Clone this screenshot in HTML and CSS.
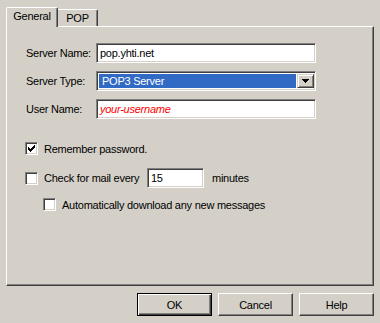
FILE: index.html
```html
<!DOCTYPE html>
<html lang="en">
<head>
    <meta charset="UTF-8">
    <title>Account Properties</title>
    <link rel="stylesheet" href="styles.css">
</head>
<body>
    <div class="dialog">
        <div class="tabs" role="tablist">
            <div class="tab tab-active" role="tab" aria-selected="true">General</div>
            <div class="tab" role="tab">POP</div>
        </div>

        <div class="panel" role="tabpanel">
            <div class="form-grid">
                <span class="field-label">Server Name:</span>
                <div class="textbox">pop.yhti.net</div>

                <span class="field-label">Server Type:</span>
                <div class="combo">
                    <span class="combo-value">POP3 Server</span>
                    <span class="combo-btn">
                        <svg width="7" height="4" viewBox="0 0 7 4" shape-rendering="crispEdges"><path d="M0 0h7v1h-1v1h-1v1h-1v1h-1v-1h-1v-1h-1v-1h-1z" fill="#000"/></svg>
                    </span>
                </div>

                <span class="field-label">User Name:</span>
                <div class="textbox textbox-hint">your-username</div>
            </div>

            <div class="check-row remember-row">
                <span class="checkbox">
                    <svg width="7" height="7" viewBox="0 0 7 7" shape-rendering="crispEdges"><path d="M6 0h1v3h-1v1h-1v1h-1v1h-1v1h-1v-1h-1v-1h-1v-3h1v1h1v1h1v-1h1v-1h1z" fill="#000"/></svg>
                </span>
                <span class="check-text">Remember password.</span>
            </div>

            <div class="check-row interval-row">
                <span class="checkbox"></span>
                <span class="check-text interval-text">Check for mail every</span>
                <div class="textbox textbox-small">15</div>
                <span class="unit-text">minutes</span>
            </div>

            <div class="check-row auto-row">
                <span class="checkbox"></span>
                <span class="check-text">Automatically download any new messages</span>
            </div>
        </div>

        <div class="buttons">
            <button type="button" class="btn btn-default">OK</button>
            <button type="button" class="btn">Cancel</button>
            <button type="button" class="btn">Help</button>
        </div>
    </div>
</body>
</html>
```

FILE: styles.css
```css
:root {
    --face: #d4d0c8;
    --shadow: #808080;
    --dark: #404040;
    --light: #ffffff;
    --select: #316ac5;
}

html, body {
    margin: 0;
    background: var(--face);
}

body {
    font-family: 'Liberation Sans', Arial, sans-serif;
    font-size: 11px;
    letter-spacing: -0.25px;
    color: #000;
    width: 380px;
    height: 323px;
    overflow: hidden;
}

.dialog {
    padding-top: 7px;
}

.tabs {
    display: flex;
    align-items: flex-end;
    height: 19px;
    margin: 0 6px;
}

.tab {
    box-sizing: border-box;
    height: 17px;
    width: 40px;
    padding-top: 2px;
    text-align: center;
    border-top: 1px solid var(--light);
    border-right: 1px solid var(--dark);
    box-shadow: inset -1px 0 var(--shadow);
    border-top-right-radius: 2px;
}

.tab-active {
    position: relative;
    z-index: 1;
    height: 20px;
    width: 52px;
    margin-bottom: -1px;
    padding-top: 2px;
    background: var(--face);
    border-left: 1px solid var(--light);
    border-top-left-radius: 2px;
}

.panel {
    box-sizing: border-box;
    height: 260px;
    margin: 0 6px;
    padding: 16px 0 0 19px;
    border: 1px solid;
    border-color: var(--light) var(--dark) var(--dark) var(--light);
    box-shadow: inset -1px -1px var(--shadow);
}

.form-grid {
    display: grid;
    grid-template-columns: 70px 220px;
    row-gap: 8px;
    align-items: center;
}

.textbox,
.combo,
.checkbox {
    box-sizing: border-box;
    background: #fff;
    border: 1px solid;
    border-color: var(--shadow) var(--light) var(--light) var(--shadow);
    box-shadow: inset 1px 1px var(--dark), inset -1px -1px var(--face);
}

.textbox {
    height: 20px;
    padding: 3px 3px 0;
    white-space: nowrap;
}

.textbox-hint {
    color: #ff0000;
    font-style: italic;
}

.combo {
    display: flex;
    height: 20px;
    padding: 2px 1px 2px 2px;
}

.combo-value {
    flex: 1;
    margin-right: 1px;
    padding: 1px 0 0 3px;
    background: var(--select);
    color: #fff;
}

.combo-btn {
    box-sizing: border-box;
    display: flex;
    align-items: center;
    justify-content: center;
    width: 17px;
    border: 1px solid;
    border-color: var(--face) var(--dark) var(--dark) var(--face);
    box-shadow: inset 1px 1px var(--light), inset -1px -1px var(--shadow);
    background: var(--face);
}

.check-row {
    display: flex;
    align-items: center;
    margin-left: -1px;
}

.checkbox {
    display: flex;
    align-items: center;
    justify-content: center;
    width: 13px;
    height: 13px;
    flex: none;
}

.check-text {
    margin-left: 6px;
}

.remember-row {
    height: 13px;
    margin-top: 23px;
}

.interval-row {
    height: 20px;
    margin-top: 13px;
}

.interval-text {
    width: 103px;
}

.textbox-small {
    width: 57px;
}

.unit-text {
    margin-left: 8px;
}

.auto-row {
    height: 13px;
    margin-top: 10px;
    margin-left: 17px;
}

.buttons {
    display: flex;
    justify-content: flex-end;
    gap: 6px;
    margin: 7px 6px 0 0;
}

.btn {
    box-sizing: border-box;
    width: 75px;
    height: 23px;
    padding: 0;
    font: inherit;
    letter-spacing: inherit;
    color: #000;
    background: var(--face);
    border: 1px solid;
    border-color: var(--light) var(--dark) var(--dark) var(--light);
    box-shadow: inset -1px -1px var(--shadow);
}

.btn-default {
    border-color: #000;
    box-shadow: inset 1px 1px var(--light), inset -1px -1px var(--dark), inset -2px -2px var(--shadow);
}
```
